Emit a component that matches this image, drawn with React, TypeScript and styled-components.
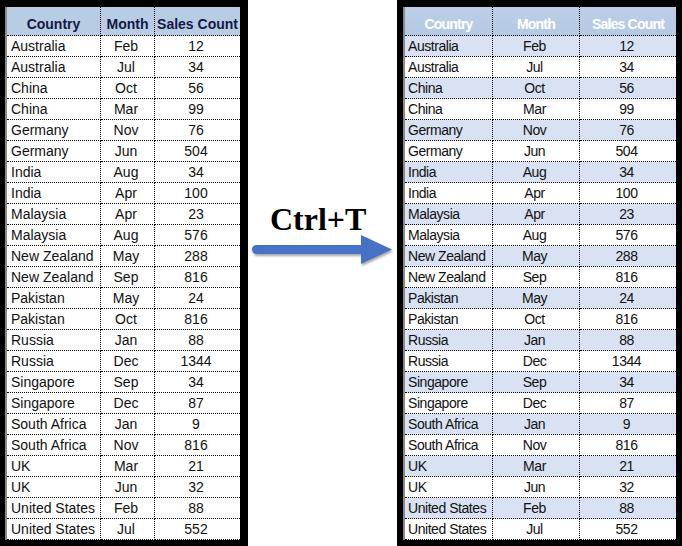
import React from "react";
import styled, { createGlobalStyle } from "styled-components";

const Global = createGlobalStyle`
  html, body { margin: 0; padding: 0; background: #fff; }
  body { width: 682px; height: 546px; overflow: hidden; }
`;

const data: [string, string, number][] = [
  ["Australia", "Feb", 12],
  ["Australia", "Jul", 34],
  ["China", "Oct", 56],
  ["China", "Mar", 99],
  ["Germany", "Nov", 76],
  ["Germany", "Jun", 504],
  ["India", "Aug", 34],
  ["India", "Apr", 100],
  ["Malaysia", "Apr", 23],
  ["Malaysia", "Aug", 576],
  ["New Zealand", "May", 288],
  ["New Zealand", "Sep", 816],
  ["Pakistan", "May", 24],
  ["Pakistan", "Oct", 816],
  ["Russia", "Jan", 88],
  ["Russia", "Dec", 1344],
  ["Singapore", "Sep", 34],
  ["Singapore", "Dec", 87],
  ["South Africa", "Jan", 9],
  ["South Africa", "Nov", 816],
  ["UK", "Mar", 21],
  ["UK", "Jun", 32],
  ["United States", "Feb", 88],
  ["United States", "Jul", 552],
];

const Page = styled.div`
  display: flex;
  width: 682px;
  height: 546px;
  font-family: "Liberation Sans", Arial, sans-serif;
`;

const Frame = styled.div<{ $w: number; $pad: string }>`
  width: ${(p) => p.$w}px;
  height: 546px;
  box-sizing: border-box;
  background: #000;
  padding: ${(p) => p.$pad};
  flex: none;
`;

const Sheet = styled.div<{ $cols: string }>`
  display: grid;
  grid-template-columns: ${(p) => p.$cols};
  grid-auto-rows: 21px;
  grid-template-rows: 29px;
  background: #fff;
  border-left: 2px solid #8a8a8a;
  box-sizing: border-box;
`;

const Cell = styled.div<{
  $align?: string;
  $head?: boolean;
  $styled?: boolean;
  $band?: boolean;
  $last?: boolean;
}>`
  box-sizing: border-box;
  display: flex;
  align-items: flex-end;
  justify-content: ${(p) => p.$align || "flex-start"};
  padding: 0 ${(p) => (p.$head ? 0 : 3)}px ${(p) => (p.$head ? 3 : 2)}px
    ${(p) => (p.$align ? 0 : p.$styled ? 3 : 4)}px;
  border-bottom: 1px dotted #000;
  border-right: ${(p) => (p.$last ? "none" : "1px dotted #000")};
  font-size: 14px;
  line-height: 16px;
  white-space: nowrap;
  overflow: hidden;
  letter-spacing: ${(p) => (p.$styled ? (p.$head ? "-0.8px" : "-0.45px") : "0")};
  font-weight: ${(p) => (p.$head ? 700 : 400)};
  color: ${(p) => (p.$head ? (p.$styled ? "#ffffff" : "#111a44") : "#111")};
  background: ${(p) =>
    p.$head
      ? p.$styled
        ? "linear-gradient(#bdcfe6, #b4c9e4)"
        : "#b8cce4"
      : p.$band
      ? "#d9e2f2"
      : "#ffffff"};
`;

const Middle = styled.div`
  width: 149px;
  flex: none;
  background: #fff;
  display: flex;
  flex-direction: column;
  align-items: flex-start;
  padding-top: 201px;
  box-sizing: border-box;
`;

const Shortcut = styled.div`
  font-family: "Liberation Serif", "Times New Roman", serif;
  font-weight: 700;
  font-size: 32px;
  line-height: 36px;
  color: #000;
  margin-left: 22px;
`;

const Arrow = styled.svg`
  display: block;
  margin-left: 2px;
  margin-top: -4px;
`;

type TableProps = { styledTable?: boolean; cols: string };

function Table({ styledTable, cols }: TableProps) {
  return (
    <Sheet $cols={cols}>
      <Cell $head $styled={styledTable} $align="center">Country</Cell>
      <Cell $head $styled={styledTable} $align="center">Month</Cell>
      <Cell $head $styled={styledTable} $align="center" $last>Sales Count</Cell>
      {data.map(([c, m, n], i) => {
        const band = !!styledTable && i % 2 === 0;
        return (
          <React.Fragment key={i}>
            <Cell $styled={styledTable} $band={band}>{c}</Cell>
            <Cell $styled={styledTable} $band={band} $align="center">{m}</Cell>
            <Cell $styled={styledTable} $band={band} $align="center" $last>{n}</Cell>
          </React.Fragment>
        );
      })}
    </Sheet>
  );
}

export default function App() {
  return (
    <>
      <Global />
      <Page>
        <Frame $w={248} $pad="7px 8px 6px 5px">
          <Table cols="94px 54px 85px" />
        </Frame>
        <Middle>
          <Shortcut>Ctrl+T</Shortcut>
          <Arrow width="144" height="36" viewBox="0 0 144 36">
            <defs>
              <filter id="sh" x="-10%" y="-30%" width="130%" height="160%">
                <feDropShadow dx="1" dy="2" stdDeviation="1.2" floodColor="#000" floodOpacity="0.35" />
              </filter>
            </defs>
            <g filter="url(#sh)">
              <rect x="2" y="12" width="112" height="9" rx="4.5" fill="#4472c4" />
              <polygon points="111,2 142,16.5 111,31" fill="#4472c4" />
            </g>
          </Arrow>
        </Middle>
        <Frame $w={285} $pad="7px 6px 7px 6px">
          <Table styledTable cols="88px 87px 96px" />
        </Frame>
      </Page>
    </>
  );
}
